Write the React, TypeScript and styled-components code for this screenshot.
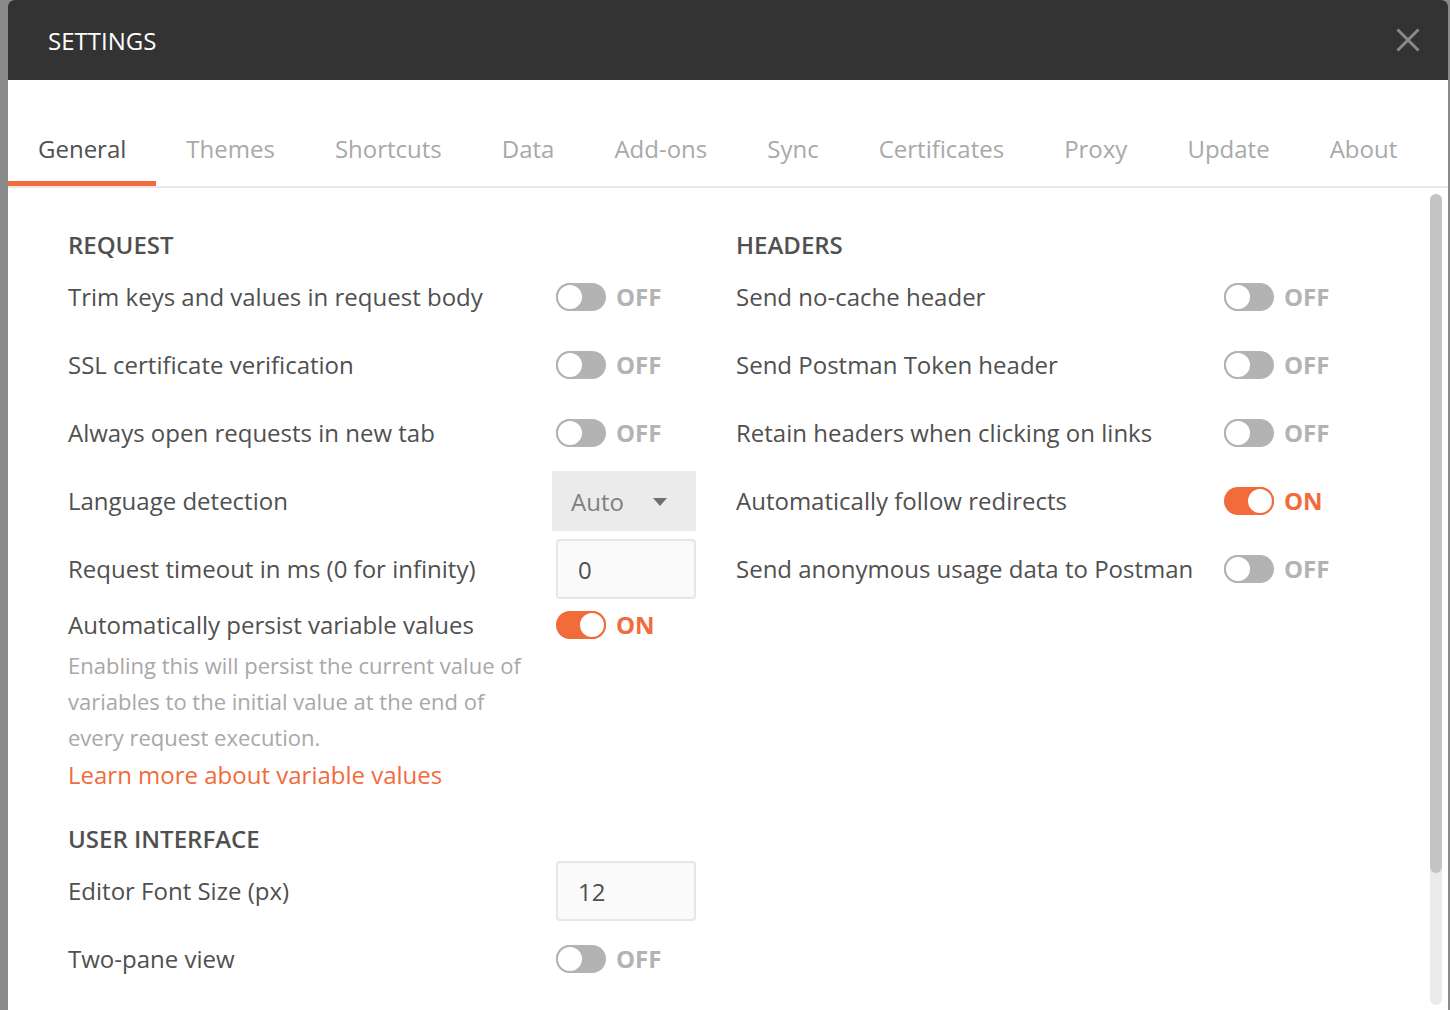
import React from "react";
import styled, { createGlobalStyle } from "styled-components";

const Global = createGlobalStyle`
  html, body { margin: 0; padding: 0; height: 100%; }
  body {
    background: #8a8a8a;
    font-family: "Open Sans", "Noto Sans", sans-serif;
    overflow: hidden;
  }
  #root { height: 100%; }
`;

const Modal = styled.div`
  margin-left: 8px;
  width: 1440px;
  height: 100vh;
  background: #fff;
  display: flex;
  flex-direction: column;
  border-radius: 6px 6px 0 0;
  overflow: hidden;
`;

const Header = styled.header`
  height: 80px;
  flex: 0 0 80px;
  background: #333333;
  display: flex;
  align-items: center;
  justify-content: space-between;
  padding: 0 28px 0 40px;
  box-sizing: border-box;
`;

const Title = styled.h1`
  margin: 0;
  color: #ffffff;
  font-size: 24px;
  font-weight: 400;
`;

const CloseButton = styled.button`
  border: 0;
  background: none;
  padding: 0;
  width: 24px;
  height: 24px;
  display: flex;
  cursor: pointer;
`;

const TabBar = styled.nav`
  display: flex;
  padding-top: 51px;
  border-bottom: 2px solid #e8e8e8;
  flex: 0 0 auto;
`;

const Tab = styled.div<{ $active?: boolean }>`
  padding: 0 30px 14px;
  font-size: 24px;
  line-height: 36px;
  color: ${(p) => (p.$active ? "#505050" : "#a9a9a9")};
  border-bottom: 5px solid ${(p) => (p.$active ? "#f26b3a" : "transparent")};
`;

const Body = styled.div`
  flex: 1;
  min-height: 0;
  display: flex;
`;

const Scroller = styled.div`
  flex: 1;
  overflow: hidden;
`;

const ScrollRail = styled.div`
  width: 12px;
  margin: 6px 6px 5px 0;
  border-radius: 6px;
  background: #ebebeb;
  display: flex;
  flex-direction: column;
`;

const ScrollThumb = styled.div`
  height: 679px;
  border-radius: 6px;
  background: #c4c4c4;
`;

const Content = styled.div`
  display: grid;
  grid-template-columns: 628px 628px;
  column-gap: 40px;
  padding: 39px 0 181px 60px;
  align-items: start;
`;

const Column = styled.section`
  display: flex;
  flex-direction: column;
`;

const SectionTitle = styled.h2<{ $spaced?: boolean }>`
  margin: ${(p) => (p.$spaced ? "28px" : "0")} 0 4px;
  font-size: 24px;
  line-height: 36px;
  font-weight: 600;
  color: #505050;
`;

const Row = styled.div<{ $compact?: boolean }>`
  display: grid;
  grid-template-columns: 488px auto;
  align-items: center;
  height: ${(p) => (p.$compact ? "36px" : "60px")};
  margin-bottom: 8px;
`;

const Label = styled.span`
  font-size: 24px;
  line-height: 36px;
  color: #505050;
  white-space: nowrap;
`;

const Description = styled.p`
  margin: -4px 0 0;
  width: 462px;
  font-size: 22px;
  line-height: 36px;
  color: #a8a8a8;
`;

const LearnLink = styled.a`
  display: block;
  margin-top: 2px;
  font-size: 24px;
  line-height: 36px;
  color: #f26b3a;
  text-decoration: none;
`;

const ToggleWrap = styled.div`
  display: flex;
  align-items: center;
  gap: 10px;
`;

const Track = styled.span<{ $on?: boolean }>`
  position: relative;
  width: 50px;
  height: 28px;
  border-radius: 14px;
  background: ${(p) => (p.$on ? "#f26b3a" : "#b3b3b3")};
  &::after {
    content: "";
    position: absolute;
    top: 0;
    left: ${(p) => (p.$on ? "22px" : "0")};
    width: 28px;
    height: 28px;
    box-sizing: border-box;
    border-radius: 50%;
    background: #fff;
    border: 2px solid ${(p) => (p.$on ? "#f26b3a" : "#b3b3b3")};
  }
`;

const ToggleText = styled.span<{ $on?: boolean }>`
  font-size: 24px;
  font-weight: 700;
  line-height: 36px;
  color: ${(p) => (p.$on ? "#f26b3a" : "#b3b3b3")};
`;

const SelectBox = styled.div`
  margin-left: -4px;
  width: 144px;
  height: 60px;
  box-sizing: border-box;
  background: #ebebeb;
  display: flex;
  align-items: center;
  justify-content: space-between;
  padding: 0 29px 0 19px;
  font-size: 24px;
  color: #808080;
`;

const Caret = styled.span`
  width: 0;
  height: 0;
  border-left: 7px solid transparent;
  border-right: 7px solid transparent;
  border-top: 8px solid #6f6f6f;
  margin-top: 2px;
`;

const InputBox = styled.div`
  width: 140px;
  height: 60px;
  box-sizing: border-box;
  border: 2px solid #e6e6e6;
  border-radius: 4px;
  background: #fafafa;
  display: flex;
  align-items: center;
  padding-left: 20px;
  font-size: 24px;
  color: #505050;
`;

const Toggle = ({ on }: { on?: boolean }) => (
  <ToggleWrap>
    <Track $on={on} />
    <ToggleText $on={on}>{on ? "ON" : "OFF"}</ToggleText>
  </ToggleWrap>
);

const tabs = ["General", "Themes", "Shortcuts", "Data", "Add-ons", "Sync", "Certificates", "Proxy", "Update", "About"];

const headerRows: [string, boolean][] = [
  ["Send no-cache header", false],
  ["Send Postman Token header", false],
  ["Retain headers when clicking on links", false],
  ["Automatically follow redirects", true],
  ["Send anonymous usage data to Postman", false],
];

export default function App() {
  return (
    <>
      <Global />
      <Modal>
        <Header>
          <Title>SETTINGS</Title>
          <CloseButton aria-label="Close">
            <svg width="24" height="24" viewBox="0 0 24 24">
              <path d="M1.5 1.5 L22.5 22.5 M22.5 1.5 L1.5 22.5" stroke="#8a8a8a" strokeWidth="3" strokeLinecap="butt" />
            </svg>
          </CloseButton>
        </Header>
        <TabBar>
          {tabs.map((t, i) => (
            <Tab key={t} $active={i === 0}>{t}</Tab>
          ))}
        </TabBar>
        <Body>
          <Scroller>
            <Content>
              <Column>
                <SectionTitle>REQUEST</SectionTitle>
                <Row>
                  <Label>Trim keys and values in request body</Label>
                  <Toggle />
                </Row>
                <Row>
                  <Label>SSL certificate verification</Label>
                  <Toggle />
                </Row>
                <Row>
                  <Label>Always open requests in new tab</Label>
                  <Toggle />
                </Row>
                <Row>
                  <Label>Language detection</Label>
                  <SelectBox>
                    Auto
                    <Caret />
                  </SelectBox>
                </Row>
                <Row>
                  <Label>Request timeout in ms (0 for infinity)</Label>
                  <InputBox>0</InputBox>
                </Row>
                <Row $compact>
                  <Label>Automatically persist variable values</Label>
                  <Toggle on />
                </Row>
                <Description>
                  Enabling this will persist the current value of variables to the initial value at the end of every request execution.
                </Description>
                <LearnLink href="#">Learn more about variable values</LearnLink>
                <SectionTitle $spaced>USER INTERFACE</SectionTitle>
                <Row>
                  <Label>Editor Font Size (px)</Label>
                  <InputBox>12</InputBox>
                </Row>
                <Row>
                  <Label>Two-pane view</Label>
                  <Toggle />
                </Row>
              </Column>
              <Column>
                <SectionTitle>HEADERS</SectionTitle>
                {headerRows.map(([label, on]) => (
                  <Row key={label}>
                    <Label>{label}</Label>
                    <Toggle on={on} />
                  </Row>
                ))}
              </Column>
            </Content>
          </Scroller>
          <ScrollRail>
            <ScrollThumb />
          </ScrollRail>
        </Body>
      </Modal>
    </>
  );
}
